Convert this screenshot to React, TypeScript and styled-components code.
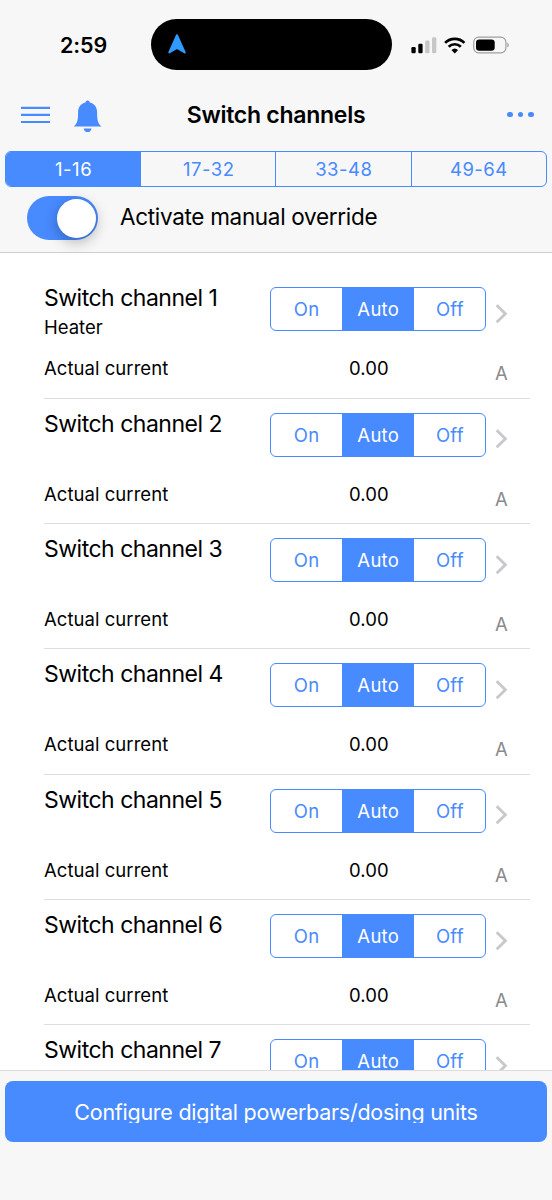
import React, { useState } from 'react';
import styled, { createGlobalStyle } from 'styled-components';

const blue = '#488aff';
const chrome = '#f7f7f7';

const GlobalStyle = createGlobalStyle`
  * { box-sizing: border-box; }
  body {
    margin: 0;
    background: #fff;
    color: #000;
    font-family: Inter, "Liberation Sans", sans-serif;
  }
  button { font: inherit; padding: 0; margin: 0; border: 0; background: none; }
`;

const Screen = styled.div`
  display: flex;
  flex-direction: column;
  width: 552px;
  height: 1200px;
  overflow: hidden;
`;

const Header = styled.header`
  flex: none;
  height: 253px;
  background: ${chrome};
  border-bottom: 1px solid #cfcfd0;
`;

const StatusBar = styled.div`
  display: flex;
  align-items: center;
  height: 89px;
  padding-left: 60px;
`;

const Clock = styled.div`
  width: 91px;
  font-size: 21.5px;
  font-weight: 600;
  line-height: 26px;
  letter-spacing: -0.1px;
`;

const Island = styled.div`
  display: flex;
  align-items: center;
  width: 241px;
  height: 51px;
  padding: 0 0 2px 16px;
  border-radius: 26px;
  background: #000;
`;

const StatusIcons = styled.svg`
  display: block;
  margin-left: 18px;
`;

const NavBar = styled.div`
  display: grid;
  grid-template-columns: 167px 218px 167px;
  align-items: center;
  height: 62px;
  padding-bottom: 11px;
`;

const NavActions = styled.div`
  display: flex;
  align-items: center;
  gap: 23px;
  padding-left: 21px;
`;

const NavMore = styled.div`
  display: flex;
  justify-content: flex-end;
  gap: 5px;
  padding-right: 18px;
`;

const Dot = styled.span`
  width: 5.6px;
  height: 5.6px;
  border-radius: 50%;
  background: ${blue};
`;

const Title = styled.h1`
  margin: 0;
  font-size: 23px;
  font-weight: 600;
  line-height: 28px;
  letter-spacing: -0.27px;
  text-align: center;
  white-space: nowrap;
`;

const Segments = styled.div<{ $width: number; $height: number }>`
  display: flex;
  width: ${(p) => p.$width}px;
  height: ${(p) => p.$height}px;
  border: 1.4px solid ${blue};
  border-radius: 6px;
  overflow: hidden;
`;

const Segment = styled.button<{ $active?: boolean; $spacing?: number }>`
  flex: 1 1 0;
  padding-left: 0.5px;
  color: ${(p) => (p.$active ? '#fff' : blue)};
  background: ${(p) => (p.$active ? blue : 'transparent')};
  font-size: 18.5px;
  line-height: 24px;
  letter-spacing: ${(p) => p.$spacing ?? 0}px;
  & + & { border-left: 1px solid ${blue}; }
`;

const TabBar = styled.div`
  display: flex;
  height: 36px;
  padding-left: 5.3px;
`;

const OverrideRow = styled.label`
  display: flex;
  align-items: center;
  height: 62px;
  padding: 0 0 0 27px;
`;

const Switch = styled.button<{ $on: boolean }>`
  display: flex;
  align-items: center;
  justify-content: ${(p) => (p.$on ? 'flex-end' : 'flex-start')};
  width: 71px;
  height: 44px;
  padding: 0 2.5px;
  border-radius: 22px;
  background: ${(p) => (p.$on ? blue : '#e6e6e6')};
`;

const Knob = styled.span`
  width: 39px;
  height: 39px;
  border-radius: 50%;
  background: #fff;
  box-shadow: 0 4px 14px rgba(0, 0, 0, 0.28);
`;

const OverrideText = styled.span`
  margin-left: 22px;
  padding-bottom: 2px;
  font-size: 22.5px;
  line-height: 28px;
  letter-spacing: -0.31px;
`;

const List = styled.main`
  flex: 1;
  min-height: 0;
  overflow: hidden;
  padding: 20.15px 22px 0 44px;
  background: #fff;
`;

const Row = styled.section`
  display: flex;
  height: 125.4px;
  border-bottom: 1px solid #dedede;
`;

const Labels = styled.div`
  display: flex;
  flex-direction: column;
  width: 226px;
  padding-top: 11px;
`;

const Name = styled.h2`
  margin: 0;
  height: 28px;
  font-size: 23px;
  font-weight: 400;
  line-height: 28px;
  letter-spacing: -0.5px;
  white-space: nowrap;
`;

const Description = styled.div`
  height: 30px;
  font-size: 18.5px;
  line-height: 30px;
`;

const Reading = styled.div<{ $top?: number; $left?: number }>`
  margin-top: ${(p) => p.$top ?? 0}px;
  padding-left: ${(p) => p.$left ?? 0}px;
  font-size: 18.5px;
  line-height: 24px;
  letter-spacing: 0.05px;
`;

const Controls = styled.div`
  width: 216px;
  padding-top: 14px;
`;

const Trailing = styled.div`
  display: flex;
  flex-direction: column;
  padding: 29.7px 0 0 9px;
`;

const Unit = styled.span`
  margin-top: 37.3px;
  color: #8a8a8e;
  font-size: 18.5px;
  line-height: 24px;
`;

const Footer = styled.footer`
  flex: none;
  height: 130px;
  padding: 10px 5.3px 0;
  background: ${chrome};
  border-top: 1px solid #dcdcdd;
`;

const ConfigureButton = styled.button`
  display: flex;
  align-items: center;
  justify-content: center;
  width: 100%;
  height: 61.3px;
  border-radius: 8px;
  background: ${blue};
  color: #fff;
`;

const ConfigureText = styled.span`
  height: 22px;
  overflow: hidden;
  font-size: 21.5px;
  line-height: 22px;
  letter-spacing: -0.26px;
  white-space: nowrap;
`;

const LocationArrow = () => (
  <svg width="20" height="22" viewBox="0 0 20 22">
    <path d="M10 2.2 2.3 19.4 10 14.9 17.7 19.4Z" fill="#309aff" stroke="#309aff" strokeWidth="2" strokeLinejoin="round" />
  </svg>
);

const MenuIcon = () => (
  <svg width="29" height="18" viewBox="0 0 29 18">
    <path d="M0 1.8H29M0 8.9H29M0 16H29" stroke={blue} strokeWidth="2.2" />
  </svg>
);

const BellIcon = () => (
  <svg width="30" height="36" viewBox="0.300 -2.800 30 36">
    <path
      d="M14.9 .7c1.3 0 1.9 .9 2.1 2 4.700 1 7.400 4.600 7.400 9.700 0 8.300 .7 10.700 4.300 14.300H1.200c3.500-3.600 4.200-6 4.200-14.300 0-5.100 2.700-8.700 7.400-9.700 .2-1.100 .8-2 2.100-2Z"
      fill={blue}
    />
    <path d="M11 28.600h7.800c-.3 2.200-1.900 3.700-3.900 3.700s-3.600-1.500-3.900-3.700Z" fill={blue} />
  </svg>
);

const Status = () => (
  <StatusIcons width="101" height="20" viewBox="410 34.500 101 20">
    <rect x="411.400" y="46.600" width="4.300" height="6.200" rx="1.200" />
    <rect x="418.300" y="43.300" width="4.300" height="9.500" rx="1.200" />
    <rect x="425.200" y="40" width="4.300" height="12.800" rx="1.200" fill="#c7c7c7" />
    <rect x="432" y="36.800" width="4.300" height="16" rx="1.200" fill="#c7c7c7" />
    <g fill="none" stroke="#000" strokeWidth="2.700">
      <path d="M445.100 42.400a13.700 13.700 0 0 1 19.300 0" />
      <path d="M448.700 46.200a8.700 8.700 0 0 1 12.100 0" />
    </g>
    <path d="M454.750 52.900l-3.300-3.400a4.800 4.800 0 0 1 6.600 0Z" />
    <rect x="473.700" y="36.700" width="32.200" height="15.600" rx="5" fill="none" stroke="#a0a0a0" strokeWidth="1.200" />
    <rect x="476" y="38.900" width="18.700" height="11.400" rx="3.300" />
    <path d="M507.300 42.200c2 .6 2 4 0 4.600Z" fill="#a0a0a0" />
  </StatusIcons>
);

const Chevron = () => (
  <svg width="14" height="21" viewBox="0 0 14 21">
    <path d="M1.700 2.200 10.400 10.700 1.700 19.200" fill="none" stroke="#c7c7cc" strokeWidth="2.800" />
  </svg>
);

const ranges = ['1-16', '17-32', '33-48', '49-64'];
const modes = ['On', 'Auto', 'Off'];
const channels = [
  { id: 1, description: 'Heater' },
  { id: 2 },
  { id: 3 },
  { id: 4 },
  { id: 5 },
  { id: 6 },
  { id: 7 },
];

function ChannelRow({ id, description }: { id: number; description?: string }) {
  const [mode, setMode] = useState('Auto');
  return (
    <Row>
      <Labels>
        <Name>Switch channel {id}</Name>
        <Description>{description}</Description>
        <Reading $top={14}>Actual current</Reading>
      </Labels>
      <Controls>
        <Segments $width={216} $height={44}>
          {modes.map((m) => (
            <Segment key={m} $active={m === mode} $spacing={0.3} onClick={() => setMode(m)}>
              {m}
            </Segment>
          ))}
        </Segments>
        <Reading $top={25} $left={79}>0.00</Reading>
      </Controls>
      <Trailing>
        <Chevron />
        <Unit>A</Unit>
      </Trailing>
    </Row>
  );
}

export default function App() {
  const [range, setRange] = useState('1-16');
  const [override, setOverride] = useState(true);
  return (
    <Screen>
      <GlobalStyle />
      <Header>
        <StatusBar>
          <Clock>2:59</Clock>
          <Island>
            <LocationArrow />
          </Island>
          <Status />
        </StatusBar>
        <NavBar>
          <NavActions>
            <MenuIcon />
            <BellIcon />
          </NavActions>
          <Title>Switch channels</Title>
          <NavMore>
            <Dot />
            <Dot />
            <Dot />
          </NavMore>
        </NavBar>
        <TabBar>
          <Segments $width={541.4} $height={36}>
            {ranges.map((r) => (
              <Segment key={r} $active={r === range} $spacing={0.5} onClick={() => setRange(r)}>
                {r}
              </Segment>
            ))}
          </Segments>
        </TabBar>
        <OverrideRow>
          <Switch $on={override} onClick={() => setOverride(!override)}>
            <Knob />
          </Switch>
          <OverrideText>Activate manual override</OverrideText>
        </OverrideRow>
      </Header>
      <List>
        {channels.map((c) => (
          <ChannelRow key={c.id} {...c} />
        ))}
      </List>
      <Footer>
        <ConfigureButton>
          <ConfigureText>Configure digital powerbars/dosing units</ConfigureText>
        </ConfigureButton>
      </Footer>
    </Screen>
  );
}
